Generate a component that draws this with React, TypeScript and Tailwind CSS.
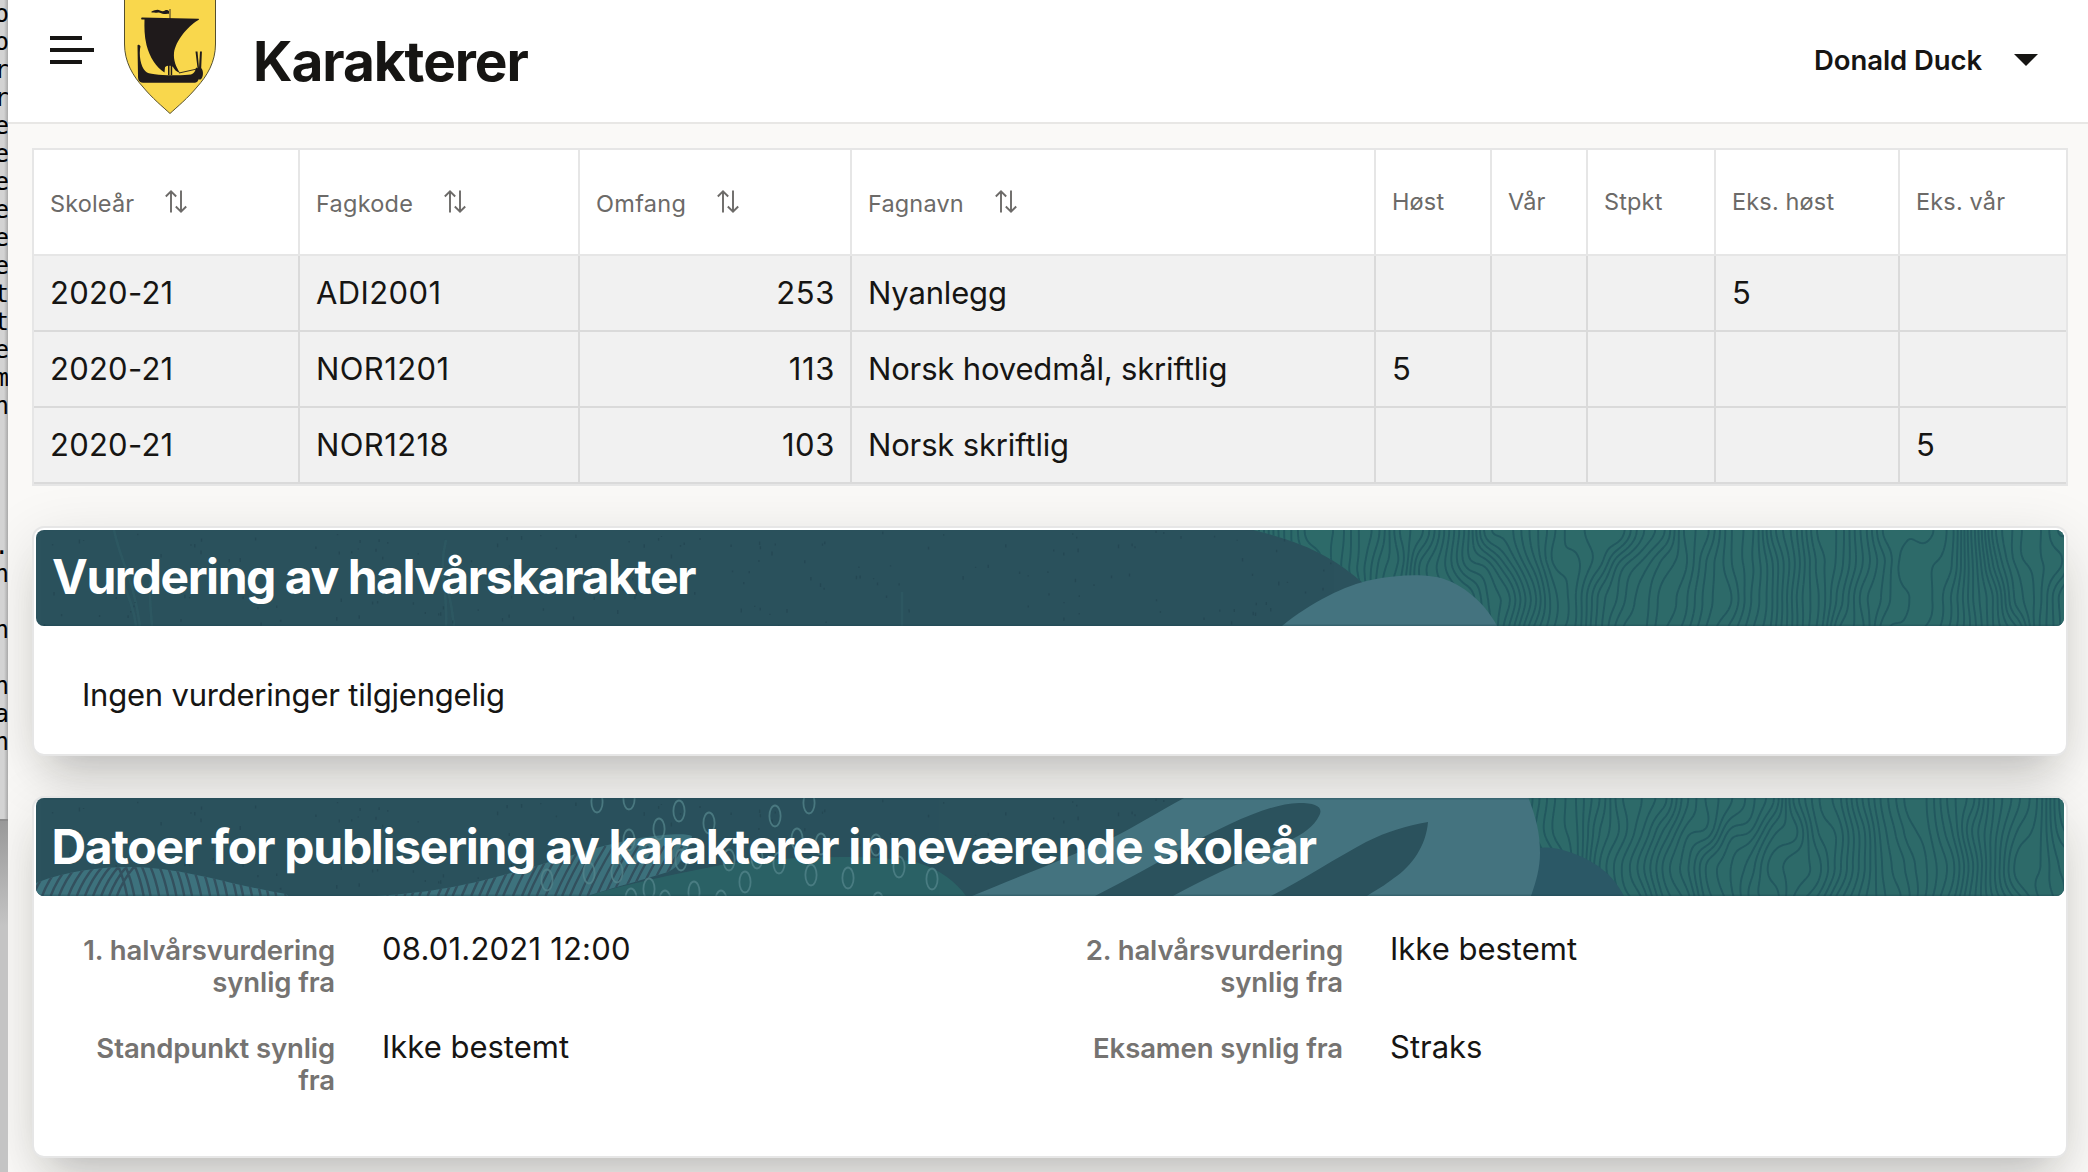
import React from "react";

/* ------------------------------------------------------------------ */
/* Wood-grain contour lines used as banner decoration                  */
/* ------------------------------------------------------------------ */

function hash(x: number, y: number, seed: number): number {
  const s = Math.sin(x * 127.1 + y * 311.7 + seed * 74.7) * 43758.5453;
  return s - Math.floor(s);
}

function noise(x: number, y: number, seed: number): number {
  const xi = Math.floor(x);
  const yi = Math.floor(y);
  const fx = x - xi;
  const fy = y - yi;
  const u = fx * fx * (3 - 2 * fx);
  const v = fy * fy * (3 - 2 * fy);
  const a = hash(xi, yi, seed);
  const b = hash(xi + 1, yi, seed);
  const c = hash(xi, yi + 1, seed);
  const d = hash(xi + 1, yi + 1, seed);
  return a + (b - a) * u + (c - a) * v + (a - b - c + d) * u * v;
}

/** Marching-squares iso-lines of a warped horizontal gradient. */
function grainPath(x0: number, x1: number, height: number, seed: number): string {
  const step = 2.5;
  const cols = Math.ceil((x1 - x0) / step);
  const rows = Math.ceil(height / step);
  const field = (x: number, y: number) =>
    x / 8 + 6.5 * noise(x / 66, y / 72, seed) + 2 * noise(x / 22, y / 34, seed + 9);
  const grid: number[][] = [];
  for (let j = 0; j <= rows; j++) {
    const line: number[] = [];
    for (let i = 0; i <= cols; i++) line.push(field(x0 + i * step, j * step));
    grid.push(line);
  }
  const out: string[] = [];
  for (let j = 0; j < rows; j++) {
    for (let i = 0; i < cols; i++) {
      const v = [grid[j][i], grid[j][i + 1], grid[j + 1][i + 1], grid[j + 1][i]];
      const px = [x0 + i * step, x0 + (i + 1) * step, x0 + (i + 1) * step, x0 + i * step];
      const py = [j * step, j * step, (j + 1) * step, (j + 1) * step];
      const lo = Math.ceil(Math.min(...v));
      const hi = Math.floor(Math.max(...v));
      for (let level = lo; level <= hi; level++) {
        const pts: string[] = [];
        for (let e = 0; e < 4; e++) {
          const n = (e + 1) % 4;
          if (v[e] < level !== v[n] < level) {
            const t = (level - v[e]) / (v[n] - v[e]);
            pts.push(`${(px[e] + t * (px[n] - px[e])).toFixed(1)} ${(py[e] + t * (py[n] - py[e])).toFixed(1)}`);
          }
        }
        for (let k = 0; k + 1 < pts.length; k += 2) out.push(`M${pts[k]}L${pts[k + 1]}`);
      }
    }
  }
  return out.join("");
}

const GRAIN_A = grainPath(1200, 2030, 98, 3);
const GRAIN_B = grainPath(1480, 2030, 98, 21);

const SPECKS = Array.from({ length: 190 }, (_, i) => ({
  x: hash(i, 1, 5) * 1300,
  y: hash(i, 2, 5) * 96,
  l: 1 + hash(i, 3, 5) * 3,
}));

function Specks() {
  return (
    <path
      d={SPECKS.map((s) => `M${s.x.toFixed(1)} ${s.y.toFixed(1)}v${s.l.toFixed(1)}`).join("")}
      stroke="#21434e"
      strokeWidth="1.4"
      opacity="0.6"
    />
  );
}

function BannerArtOne() {
  return (
    <svg className="absolute inset-0 h-full w-full" viewBox="0 0 2028 96" preserveAspectRatio="none" aria-hidden="true">
      <rect width="2028" height="96" fill="#2b525d" />
      <g fill="none" stroke="#2f5d66" strokeWidth="2.5" opacity="0.6">
        <path d="M78 0c6 30 20 50 26 96M118 30c-6 30-4 40-2 66M86 50c8 20 12 30 14 46M410 10c-8 30 2 50 0 86M404 40c10 20 12 40 14 56M866 62v34" />
      </g>
      <Specks />
      <path d="M1217 0C1275 14 1300 30 1327 53L1400 96H2028V0Z" fill="#2d6a69" />
      <clipPath id="grain-a">
        <path d="M1217 0C1275 14 1300 30 1327 53L1400 96H2028V0Z" />
      </clipPath>
      <path d={GRAIN_A} clipPath="url(#grain-a)" stroke="#22585f" strokeWidth="1.9" fill="none" />
      <path d="M1246 96C1275 72 1310 55 1335 50C1365 44 1392 44 1408 49C1432 57 1452 78 1461 96Z" fill="#44737f" />
      <rect y="94.5" width="2028" height="1.5" fill="#1e4450" opacity="0.35" />
    </svg>
  );
}

const OVALS: [number, number][] = [
  [597, 802], [629, 799], [679, 811], [659, 829], [629, 840], [649, 889], [694, 892], [547, 880], [589, 873],
  [665, 901], [681, 860], [617, 872], [775, 816], [809, 803], [709, 823], [797, 839], [821, 844], [876, 845],
  [745, 882], [811, 875], [848, 878], [899, 867], [932, 879], [779, 863], [729, 860], [757, 858], [721, 901],
  [878, 903], [631, 899],
];

/** Slanted strokes filling the two hills at the banner's lower left. */
const HATCH = Array.from({ length: 84 }, (_, i) => {
  const x = -12 + i * 8.4 + hash(i, 7, 2) * 2.5;
  const lean = x < 90 ? 24 : x < 300 ? -12 : 26;
  return `M${x.toFixed(1)} 98q${(lean * 0.35).toFixed(1)} -22 ${lean} ${x < 300 ? -36 : -50}`;
}).join("");

const HILLS =
  "M0 85C30 73 62 69 96 69C150 70 190 86 250 96L252 98H0ZM340 98C410 94 450 82 500 68C540 56 570 46 604 40C630 36 650 35 656 38C652 56 644 68 632 74C600 84 575 90 552 98Z";

function BannerArtTwo() {
  return (
    <svg className="absolute inset-0 h-full w-full" viewBox="0 0 2028 98" preserveAspectRatio="none" aria-hidden="true">
      <rect width="2028" height="98" fill="#2b525d" />
      <Specks />
      <path d="M552 98C590 86 640 76 690 66C750 58 840 56 880 64C905 72 920 84 930 98Z" fill="#2b6266" />
      <clipPath id="hills">
        <path d={HILLS} />
      </clipPath>
      <path d={HILLS} fill="#3d727d" />
      <path d={HATCH} clipPath="url(#hills)" stroke="#33505e" strokeWidth="2.4" fill="none" />
      <g fill="none" stroke="#55868c" strokeWidth="1.8" opacity="0.75">
        {OVALS.map(([x, y]) => (
          <ellipse key={`${x}-${y}`} cx={x - 36} cy={y - 798} rx="5.6" ry="10.5" />
        ))}
      </g>
      <rect x="1480" width="548" height="98" fill="#2d6a69" />
      <path d={GRAIN_B} stroke="#22585f" strokeWidth="1.9" fill="none" />
      <path d="M1480 56C1500 48 1515 48 1530 53C1560 62 1578 78 1588 98H1480Z" fill="#2b5866" />
      <path
        d="M1148 0H1492.5C1500 20 1504 34 1504 55C1504 70 1500 84 1495 98H936C990 76 1040 56 1076 40C1100 28 1122 14 1148 0Z"
        fill="#44737f"
      />
      <path
        d="M1059 98C1090 82 1120 66 1150 48C1190 28 1230 6 1263 5C1280 5 1288 9 1283 18C1278 28 1268 36 1250 44C1210 62 1170 80 1137 98Z"
        fill="#2b525d"
      />
      <path d="M1235 98C1270 80 1300 60 1330 44C1352 33 1370 28 1392 24C1390 48 1376 68 1358 80C1348 88 1340 92 1331 98Z" fill="#2b525d" />
      <rect y="96.5" width="2028" height="1.5" fill="#1e4450" opacity="0.35" />
      <rect width="2028" height="1.5" fill="#1e4450" opacity="0.3" />
    </svg>
  );
}

/* ------------------------------------------------------------------ */
/* Icons                                                               */
/* ------------------------------------------------------------------ */

function Crest() {
  return (
    <svg className="block h-[116px] w-[94px]" viewBox="0 0 94 116" aria-hidden="true">
      <path
        d="M1.5 -4H92.5V44C92.5 62 84 76 74 87C65 98 54 107 47 113.5C40 107 29 98 20 87C10 76 1.5 62 1.5 44Z"
        fill="#f9d74c"
        stroke="#55502f"
        strokeWidth="1"
      />
      <g fill="#1f1a1b">
        <path d="M19 17.5L75.500 18.800C76.500 18.900 76 20 75 20.200C64 27 52.500 41 51 53C50.300 60 53 67 57 73C53 71.500 51.500 69.500 50 67C48.500 65.300 44 65.200 42 67.200L41.500 72.500C33 67 27 58 23.500 45C21.300 36 21.300 27 21.500 19.500H18.500C18 18.500 18 17.500 19 17.500Z" />
        <path d="M14.500 45.500C14.500 44 17 44.500 17.500 46.500L17 49C16 60 19 69 24 72.500C30 75.500 60 76 68 74.500C71 73.500 72.500 71 73 67.500L78 70C76 75 76.500 82.500 72 82.800H20C15.500 82.500 15 79 15 76Z" />
        <path d="M45 65H46.500V75H45ZM47.700 65H49.200V75H47.700Z" />
        <path d="M72.500 51.500L74.500 51.500L76 68L77 51.500L78.900 51.500L78.200 68C81 71 80.300 78 77.500 79.500L75.500 79.500C73.500 76 73 71 74.500 68Z" />
        <path d="M28.500 11.500C32 10.500 34 9 37 10.500C39 11.500 40.500 11.500 42 10.500C43.500 9.500 45.200 10.500 46 11V13.800C44 13.500 42.500 14 41 14C38.500 14 37 12 35 12.500C33 13 31.500 12.500 28.500 12.500Z" />
      </g>
      <path d="M47 9V19M56 73L74 69" fill="none" stroke="#1f1a1b" strokeWidth="0.9" />
    </svg>
  );
}

function SortIcon() {
  return (
    <svg
      className="ml-[31px] block h-6 w-[22px] -translate-y-[2.5px]"
      viewBox="0 0 22 24"
      fill="none"
      stroke="#6c6a68"
      strokeWidth="1.9"
      aria-hidden="true"
    >
      <path d="M6 23V2M0.8 7L6 1.8L11.2 7" />
      <path d="M16 1V22M10.8 17L16 22.2L21.2 17" />
    </svg>
  );
}

/* ------------------------------------------------------------------ */
/* Page parts                                                          */
/* ------------------------------------------------------------------ */

const EDGE_LINES = [
  "o", "o", "r", "r", "e", "e", "e", "e", "e", "e", "t", "t", "e", "m", "n",
  "", "", "", "", ".", "n", "", "n", "", "n", "a", "n",
];

/** The sliver of the text window that shows behind the browser. */
function BackgroundWindow() {
  return (
    <div className="h-[1172px] w-2 shrink-0 overflow-hidden bg-linear-to-r from-[#d3d3d3] from-50% to-[#a9a9a9]">
      <div className="flex h-[821px] flex-col items-end border-b-2 border-[#8c8c8c] font-['DejaVu_Sans_Mono',monospace] text-[24px] leading-7 text-black">
        {EDGE_LINES.map((c, i) => (
          <div key={i} className="-mr-px flex h-7 shrink-0 justify-end">
            {c}
          </div>
        ))}
      </div>
      <div className="h-[351px] bg-linear-to-b from-[#999999] to-[#c4c4c4] to-30%" />
    </div>
  );
}

function Header() {
  return (
    <header className="flex h-[124px] border-b-2 border-[#e8e7e5] bg-white text-[#161513]">
      <button className="mt-9 ml-[42px] flex h-7 w-11 flex-col justify-between" aria-label="Meny">
        <span className="h-1 w-8 bg-[#161513]" />
        <span className="h-1 w-11 bg-[#161513]" />
        <span className="h-1 w-8 bg-[#161513]" />
      </button>
      <div className="ml-[29px] h-[116px] w-[94px]">
        <Crest />
      </div>
      <h1 className="ml-[36px] text-[55px] leading-[123px] font-bold tracking-[-1.07px]">Karakterer</h1>
      <button className="mr-[50px] ml-auto flex h-[120px] items-center gap-8">
        <span className="text-[27.5px] leading-8 font-semibold tracking-[-0.08px]">Donald Duck</span>
        <svg className="block h-3 w-6" viewBox="0 0 24 12" aria-hidden="true">
          <path d="M0 0H24L12 12Z" fill="#161513" />
        </svg>
      </button>
    </header>
  );
}

type Column = { label: string; sortable?: boolean; track?: string };

const COLUMNS: Column[] = [
  { label: "Skoleår", sortable: true, track: "tracking-[0.15px]" },
  { label: "Fagkode", sortable: true, track: "tracking-[0.25px]" },
  { label: "Omfang", sortable: true, track: "tracking-[0.3px]" },
  { label: "Fagnavn", sortable: true, track: "tracking-[0.15px]" },
  { label: "Høst" },
  { label: "Vår" },
  { label: "Stpkt" },
  { label: "Eks. høst" },
  { label: "Eks. vår" },
];

const ROWS: string[][] = [
  ["2020-21", "ADI2001", "253", "Nyanlegg", "", "", "", "5", ""],
  ["2020-21", "NOR1201", "113", "Norsk hovedmål, skriftlig", "5", "", "", "", ""],
  ["2020-21", "NOR1218", "103", "Norsk skriftlig", "", "", "", "", "5"],
];

const CELL_TRACKING = ["tracking-[0.25px]", "tracking-[0.4px]", "tracking-[0.6px]", "tracking-[-0.16px]"];

const GRID = "grid grid-cols-[266px_280px_272px_524px_116px_96px_128px_184px_166px]";

function GradesTable() {
  return (
    <div className="w-[2036px] border-2 border-[#e6e6e6]">
      <div className={`${GRID} h-[106px] border-b-2 border-[#e6e6e6] bg-white text-[23.5px] text-[#6c6a68]`}>
        {COLUMNS.map((c, i) => (
          <div
            key={c.label}
            className={`flex items-center pl-4 ${c.track ?? "tracking-[0.15px]"} ${c.sortable ? "pt-[3px]" : ""} ${
              i < COLUMNS.length - 1 ? "border-r-2 border-[#e6e6e6]" : ""
            }`}
          >
            {c.label}
            {c.sortable && <SortIcon />}
          </div>
        ))}
      </div>
      {ROWS.map((row) => (
        <div key={row[1]} className={`${GRID} h-[76px] border-b-2 border-[#dadada] bg-[#f1f1f1] text-[31px] text-[#161513]`}>
          {row.map((cell, i) => (
            <div
              key={i}
              className={`flex items-center whitespace-nowrap ${i === 2 ? "justify-end pr-[15px]" : "pl-4"} ${
                CELL_TRACKING[i] ?? ""
              } ${i < row.length - 1 ? "border-r-2 border-[#dadada]" : ""}`}
            >
              {cell}
            </div>
          ))}
        </div>
      ))}
    </div>
  );
}

function Card({
  className,
  banner,
  children,
}: {
  className: string;
  banner: React.ReactNode;
  children: React.ReactNode;
}) {
  return (
    <section
      className={`${className} w-[2036px] rounded-[12px] border-2 border-[#e6e6e6] bg-white shadow-[0_28px_40px_-18px_rgba(22,21,19,0.2),0_14px_60px_0_rgba(22,21,19,0.12)]`}
    >
      {banner}
      {children}
    </section>
  );
}

function Fact({ label, value, track }: { label: string; value: string; track?: string }) {
  return (
    <div className="flex h-16">
      <dt className="w-[270px] text-right text-[27.5px] leading-8 font-semibold tracking-[-0.1px] text-[#757371]">
        {label}
      </dt>
      <dd className={`-mt-px ml-[47px] text-[31px] leading-8 text-[#161513] ${track ?? ""}`}>{value}</dd>
    </div>
  );
}

export default function App() {
  return (
    <div className="flex h-[1172px] w-[2088px] overflow-hidden bg-[#faf9f7] font-[Inter,'Liberation_Sans',sans-serif]">
      <BackgroundWindow />
      <div className="flex min-w-0 flex-1 flex-col overflow-hidden bg-[#faf9f7]">
        <Header />
        <main className="flex flex-col pt-6 pl-6">
          <GradesTable />
          <Card
            className="mt-10 h-[230px]"
            banner={
              <div className="relative mx-[2px] mt-[2px] flex h-24 items-center overflow-hidden rounded-[8px]">
                <BannerArtOne />
                <h2 className="relative -mt-[2px] pl-4 text-[48px] leading-none font-bold tracking-[-1.46px] text-white">
                  Vurdering av halvårskarakter
                </h2>
              </div>
            }
          >
            <p className="pt-[49px] pl-12 text-[31px] leading-10 tracking-[-0.22px] text-[#161513]">
              Ingen vurderinger tilgjengelig
            </p>
          </Card>
          <Card
            className="mt-10 h-[362px]"
            banner={
              <div className="relative mx-[2px] flex h-[98px] items-center overflow-hidden rounded-[8px]">
                <BannerArtTwo />
                <h2 className="relative pl-[15.5px] text-[48px] leading-none font-bold tracking-[-1.29px] whitespace-nowrap text-white">
                  Datoer for publisering av karakterer inneværende skoleår
                </h2>
              </div>
            }
          >
            <dl className="grid grid-cols-[1008px_1fr] gap-y-[34px] pt-[38px] pl-[31px]">
              <Fact label="1. halvårsvurdering synlig fra" value="08.01.2021 12:00" track="tracking-[0.2px]" />
              <Fact label="2. halvårsvurdering synlig fra" value="Ikke bestemt" />
              <Fact label="Standpunkt synlig fra" value="Ikke bestemt" />
              <Fact label="Eksamen synlig fra" value="Straks" />
            </dl>
          </Card>
        </main>
      </div>
    </div>
  );
}
